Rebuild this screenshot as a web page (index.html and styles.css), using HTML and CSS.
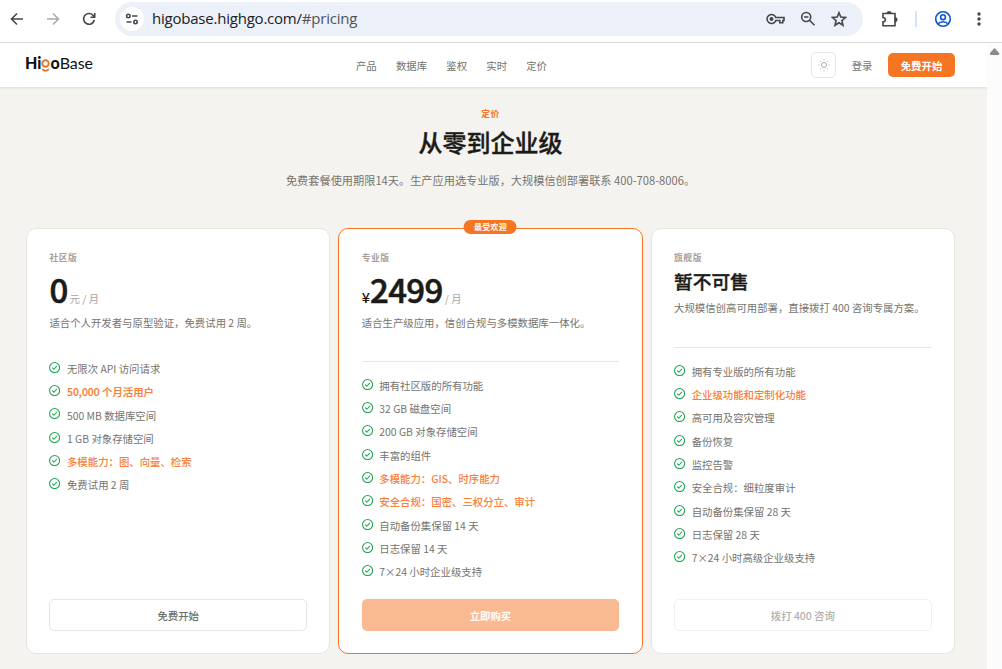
FILE: index.html
```html
<!DOCTYPE html>
<html lang="zh-CN">
<head>
    <meta charset="UTF-8">
    <meta name="viewport" content="width=device-width, initial-scale=1.0">
    <title>HigoBase 定价</title>
    <link rel="stylesheet" href="styles.css">
</head>
<body>
    <svg class="defs" width="0" height="0">
        <symbol id="check" viewBox="0 0 24 24">
            <circle cx="12" cy="12" r="10.800" fill="none" stroke="currentColor" stroke-width="2.3"/>
            <path d="M7.5 12.5l3 3 6-6.500" fill="none" stroke="currentColor" stroke-width="2.2" stroke-linecap="round" stroke-linejoin="round"/>
        </symbol>
    </svg>

    <div class="browser-bar">
        <div class="nav-buttons">
            <svg width="14" height="14" viewBox="0 0 14 14"><path d="M13 7H2M7 1.500L1.500 7 7 12.500" /></svg>
            <svg class="disabled" width="14" height="14" viewBox="0 0 14 14"><path d="M1 7h11M7 1.500L12.500 7 7 12.500" /></svg>
            <svg width="14" height="14" viewBox="0 0 14 14"><path d="M12.300 8A5.400 5.400 0 1 1 11 3.200L12.500 4.800M12.700 1v4.200H8.500" /></svg>
        </div>
        <div class="address">
            <span class="site-info">
                <svg width="14" height="12" viewBox="0 0 14 12"><circle cx="3.300" cy="3" r="1.700"/><path d="M7 3h5.500M1.500 9h5"/><circle cx="10.500" cy="9" r="1.700"/></svg>
            </span>
            <span class="url">higobase.highgo.com/<span class="hash">#pricing</span></span>
            <div class="address-icons">
                <svg width="19" height="12" viewBox="0 0 19 12"><path d="M9.800 4.500h8.200v3h-1.200v2.300h-3V7.500h-4A4.500 4.500 0 1 1 9.800 4.500z"/><circle cx="5.500" cy="6" r="1.200" class="filled"/></svg>
                <svg width="16" height="16" viewBox="0 0 16 16"><circle cx="6.200" cy="6" r="4.500"/><path d="M4 6h4.400M9.500 9.300l5 5"/></svg>
                <svg width="16" height="16" viewBox="0 0 16 16"><path d="M8 1.700l1.800 4.400 4.700.4-3.600 3.100 1.100 4.600L8 11.700l-4 2.500 1.100-4.600-3.600-3.100 4.700-.4z"/></svg>
            </div>
        </div>
        <div class="browser-tools">
            <svg width="18" height="18" viewBox="0 0 18 18"><path d="M2 3.500h12v12.300H2v-4c3.200-.3 3.200-4 0-4.300z"/><path d="M6.200 3a2 1.800 0 0 1 3.800 0zM14.500 7.700a1.800 2 0 0 1 0 3.800z" class="filled"/></svg>
            <span class="separator"></span>
            <svg class="profile" width="18" height="18" viewBox="0 0 18 18"><circle cx="9" cy="9" r="7.300"/><circle cx="9" cy="7.200" r="2.400"/><path d="M3.800 14c2.500-3 7.900-3 10.400 0"/></svg>
            <svg class="dots" width="4" height="14" viewBox="0 0 4 14"><circle cx="2" cy="2" r="1.700"/><circle cx="2" cy="7" r="1.700"/><circle cx="2" cy="12" r="1.700"/></svg>
        </div>
    </div>

    <div class="viewport">
        <div class="page">
            <header class="header">
                <a class="logo"><b>Hi</b><svg class="logo-g" width="9" height="17" viewBox="0 0 9 17"><circle cx="4.500" cy="7.500" r="3.200"/><path d="M1.200 13.200q3.300 3.400 6.600 0"/></svg><b>o</b><span>Base</span></a>
                <nav class="menu">
                    <a>产品</a>
                    <a>数据库</a>
                    <a>鉴权</a>
                    <a>实时</a>
                    <a>定价</a>
                </nav>
                <div class="actions">
                    <button class="theme">
                        <svg width="12" height="12" viewBox="0 0 24 24"><circle cx="12" cy="12" r="5"/><path d="M12 1v2M12 21v2M4.200 4.200l1.400 1.400M18.400 18.400l1.400 1.400M1 12h2M21 12h2M4.200 19.800l1.400-1.400M18.400 5.600l1.400-1.400"/></svg>
                    </button>
                    <a class="login">登录</a>
                    <button class="start">免费开始</button>
                </div>
            </header>

            <main class="pricing">
                <p class="eyebrow">定价</p>
                <h1>从零到企业级</h1>
                <p class="subtitle">免费套餐使用期限14天。生产应用选专业版，大规模信创部署联系 400-708-8006。</p>

                <div class="plans">
                    <section class="plan">
                        <h2>社区版</h2>
                        <div class="price"><strong>0</strong><span class="unit">元 / 月</span></div>
                        <p class="desc">适合个人开发者与原型验证，免费试用 2 周。</p>
                        <ul class="features no-line">
                            <li><svg><use href="#check"/></svg>无限次 API 访问请求</li>
                            <li class="hot bold"><svg><use href="#check"/></svg>50,000 个月活用户</li>
                            <li><svg><use href="#check"/></svg>500 MB 数据库空间</li>
                            <li><svg><use href="#check"/></svg>1 GB 对象存储空间</li>
                            <li class="hot"><svg><use href="#check"/></svg>多模能力：图、向量、检索</li>
                            <li><svg><use href="#check"/></svg>免费试用 2 周</li>
                        </ul>
                        <button class="btn">免费开始</button>
                    </section>

                    <section class="plan popular">
                        <span class="badge">最受欢迎</span>
                        <h2>专业版</h2>
                        <div class="price"><span class="currency">¥</span><strong>2499</strong><span class="unit">/ 月</span></div>
                        <p class="desc">适合生产级应用，信创合规与多模数据库一体化。</p>
                        <ul class="features">
                            <li><svg><use href="#check"/></svg>拥有社区版的所有功能</li>
                            <li><svg><use href="#check"/></svg>32 GB 磁盘空间</li>
                            <li><svg><use href="#check"/></svg>200 GB 对象存储空间</li>
                            <li><svg><use href="#check"/></svg>丰富的组件</li>
                            <li class="hot"><svg><use href="#check"/></svg>多模能力：GIS、时序能力</li>
                            <li class="hot"><svg><use href="#check"/></svg>安全合规：国密、三权分立、审计</li>
                            <li><svg><use href="#check"/></svg>自动备份集保留 14 天</li>
                            <li><svg><use href="#check"/></svg>日志保留 14 天</li>
                            <li><svg><use href="#check"/></svg>7×24 小时企业级支持</li>
                        </ul>
                        <button class="btn btn-primary">立即购买</button>
                    </section>

                    <section class="plan">
                        <h2>旗舰版</h2>
                        <div class="price-text">暂不可售</div>
                        <p class="desc">大规模信创高可用部署，直接拨打 400 咨询专属方案。</p>
                        <ul class="features">
                            <li><svg><use href="#check"/></svg>拥有专业版的所有功能</li>
                            <li class="hot"><svg><use href="#check"/></svg>企业级功能和定制化功能</li>
                            <li><svg><use href="#check"/></svg>高可用及容灾管理</li>
                            <li><svg><use href="#check"/></svg>备份恢复</li>
                            <li><svg><use href="#check"/></svg>监控告警</li>
                            <li><svg><use href="#check"/></svg>安全合规：细粒度审计</li>
                            <li><svg><use href="#check"/></svg>自动备份集保留 28 天</li>
                            <li><svg><use href="#check"/></svg>日志保留 28 天</li>
                            <li><svg><use href="#check"/></svg>7×24 小时高级企业级支持</li>
                        </ul>
                        <button class="btn btn-disabled">拨打 400 咨询</button>
                    </section>
                </div>
            </main>
        </div>
        <div class="scrollbar"><span class="arrow-up"></span></div>
    </div>
</body>
</html>
```
FILE: styles.css
```css
* {
    box-sizing: border-box;
    margin: 0;
    padding: 0;
}
body {
    height: 669px;
    overflow: hidden;
    display: flex;
    flex-direction: column;
    font-family: "Noto Sans CJK SC", sans-serif;
    font-size: 10.4px;
    color: #75736e;
    background-color: #fff;
}
button {
    font-family: inherit;
    font-size: 10.4px;
}
.defs {
    position: absolute;
}

/* browser toolbar */
.browser-bar {
    height: 43px;
    flex-shrink: 0;
    display: flex;
    align-items: center;
    padding: 0 21px 5px 10px;
    border-bottom: 1px solid #dcdcdc;
}
.browser-bar svg {
    fill: none;
    stroke: #45474a;
    stroke-width: 1.6;
    flex-shrink: 0;
}
.browser-bar .disabled {
    stroke: #ababab;
}
.browser-bar .filled {
    fill: #45474a;
}
.nav-buttons {
    display: flex;
    gap: 22px;
    margin-right: 19px;
}
.address {
    width: 748px;
    height: 34px;
    display: flex;
    align-items: center;
    padding: 0 16px 0 5px;
    border-radius: 17px;
    background-color: #ecf0f9;
}
.site-info {
    width: 24px;
    height: 24px;
    display: flex;
    align-items: center;
    justify-content: center;
    border-radius: 50%;
    background-color: #fff;
}
.url {
    margin-left: 8px;
    font-family: "Open Sans", sans-serif;
    font-size: 15px;
    letter-spacing: -0.22px;
    line-height: 20px;
    padding-bottom: 2px;
    color: #202124;
}
.hash {
    color: #50535a;
}
.address-icons {
    display: flex;
    align-items: center;
    gap: 15px;
    margin-left: auto;
}
.browser-tools {
    flex: 1;
    display: flex;
    align-items: center;
    margin-left: 18px;
}
.separator {
    width: 2px;
    height: 16px;
    margin: 0 17px 0 16px;
    background-color: #d3e3fd;
}
.browser-bar .profile {
    stroke: #0b57d0;
}
.browser-bar .dots {
    margin-left: auto;
    fill: #45474a;
    stroke: none;
}

/* site */
.viewport {
    flex: 1;
    display: flex;
}
.page {
    flex: 1;
    background-color: #f5f3ef;
}
.scrollbar {
    width: 15px;
    display: flex;
    justify-content: center;
    padding-top: 5px;
    background-color: #fcfcfc;
}
.arrow-up {
    width: 10px;
    height: 7px;
    background-color: #8b8b8b;
    clip-path: polygon(50% 0, 100% 80%, 90% 100%, 10% 100%, 0 80%);
}
.header {
    height: 45px;
    display: grid;
    grid-template-columns: 1fr auto 1fr;
    align-items: center;
    padding: 0 32px 0 25px;
    background-color: #fff;
    border-bottom: 1px solid #e5e4e0;
    box-shadow: 0 1px 1px rgba(0, 0, 0, 0.04);
}
.logo {
    display: flex;
    align-items: center;
    height: 20px;
    margin-top: -5px;
    font-family: Lato, sans-serif;
    font-size: 16px;
    color: #111;
}
.logo b {
    font-weight: 900;
}
.logo span {
    letter-spacing: -0.1px;
}
.logo-g {
    fill: none;
    stroke: #e8731c;
    stroke-width: 1.9;
    margin-top: 3px;
}
.menu {
    display: flex;
    gap: 19.2px;
    margin-left: -77px;
}
.actions {
    display: flex;
    align-items: center;
    justify-content: flex-end;
}
.theme {
    width: 25px;
    height: 26px;
    display: flex;
    align-items: center;
    justify-content: center;
    border: 1px solid #e7e5e4;
    border-radius: 5px;
    background-color: #fff;
}
.theme svg {
    fill: none;
    stroke: #a8a29e;
    stroke-width: 1.8;
}
.login {
    margin: 0 15.5px;
}
.start {
    width: 67px;
    height: 24px;
    border: none;
    border-radius: 5px;
    background-color: #f67522;
    color: #fff;
    font-weight: 700;
}

.pricing {
    padding: 18px 32px 0 26px;
    text-align: center;
}
.eyebrow {
    font-size: 8.8px;
    line-height: 16px;
    font-weight: 700;
    letter-spacing: 0.5px;
    color: #f67522;
}
h1 {
    margin-top: 3px;
    font-size: 24px;
    line-height: 34px;
    font-weight: 500;
    -webkit-text-stroke: 0.4px;
    color: #1c1b18;
}
.subtitle {
    margin-top: 12px;
    font-size: 11.2px;
    line-height: 18px;
}
.plans {
    display: grid;
    grid-template-columns: repeat(3, 1fr);
    gap: 8px;
    height: 426px;
    margin-top: 39px;
    text-align: left;
}
.plan {
    position: relative;
    display: flex;
    flex-direction: column;
    padding: 22px 22.4px;
    border: 1px solid #e7e5e1;
    border-radius: 10px;
    background-color: #fff;
}
.popular {
    border-color: #f67522;
}
.badge {
    position: absolute;
    top: -9px;
    left: 50%;
    transform: translateX(-50%);
    width: 53px;
    height: 14px;
    border-radius: 7px;
    background-color: #f67522;
    color: #fff;
    font-size: 8px;
    line-height: 14px;
    font-weight: 700;
    text-align: center;
    letter-spacing: 0.3px;
}
h2 {
    font-size: 8.8px;
    line-height: 14px;
    font-weight: 700;
    letter-spacing: 0.5px;
    color: #a8a29e;
}
.price {
    display: flex;
    align-items: baseline;
    height: 40px;
    margin-top: 4px;
    line-height: 40px;
    color: #1c1b18;
}
.price strong {
    font-size: 33px;
    font-weight: 500;
    letter-spacing: -0.6px;
    -webkit-text-stroke: 0.6px;
}
.currency {
    font-size: 14.4px;
    font-weight: 500;
}
.unit {
    margin-left: 2px;
    color: #a8a29e;
}
.price-text {
    height: 26px;
    margin-top: 3px;
    font-size: 18.7px;
    line-height: 26px;
    font-weight: 500;
    -webkit-text-stroke: 0.4px;
    color: #1c1b18;
}
.desc {
    height: 40px;
    margin-top: 5px;
    line-height: 17px;
}
.price + .desc {
    height: 39px;
}
.features {
    display: flex;
    flex-direction: column;
    gap: 6.4px;
    margin-top: 8px;
    padding-top: 15.9px;
    border-top: 1px solid #e7e5e4;
    list-style: none;
}
.no-line {
    padding-top: 0;
    border-top: none;
}
.features li {
    display: flex;
    gap: 6.4px;
    line-height: 16.9px;
}
.features svg {
    width: 11.2px;
    height: 11.2px;
    margin-top: 0.9px;
    color: #22a455;
}
.features .hot {
    color: #f98038;
    font-weight: 500;
}
.features .bold {
    -webkit-text-stroke: 0.2px;
}
.btn {
    height: 32px;
    margin-top: auto;
    border: 1px solid #e7e5e4;
    border-radius: 5px;
    background-color: #fff;
    color: #6f6e69;
    font-weight: 500;
}
.btn-primary {
    border: none;
    background-color: #f9b991;
    color: #fff;
    font-weight: 700;
}
.btn-disabled {
    opacity: 0.55;
}
```
